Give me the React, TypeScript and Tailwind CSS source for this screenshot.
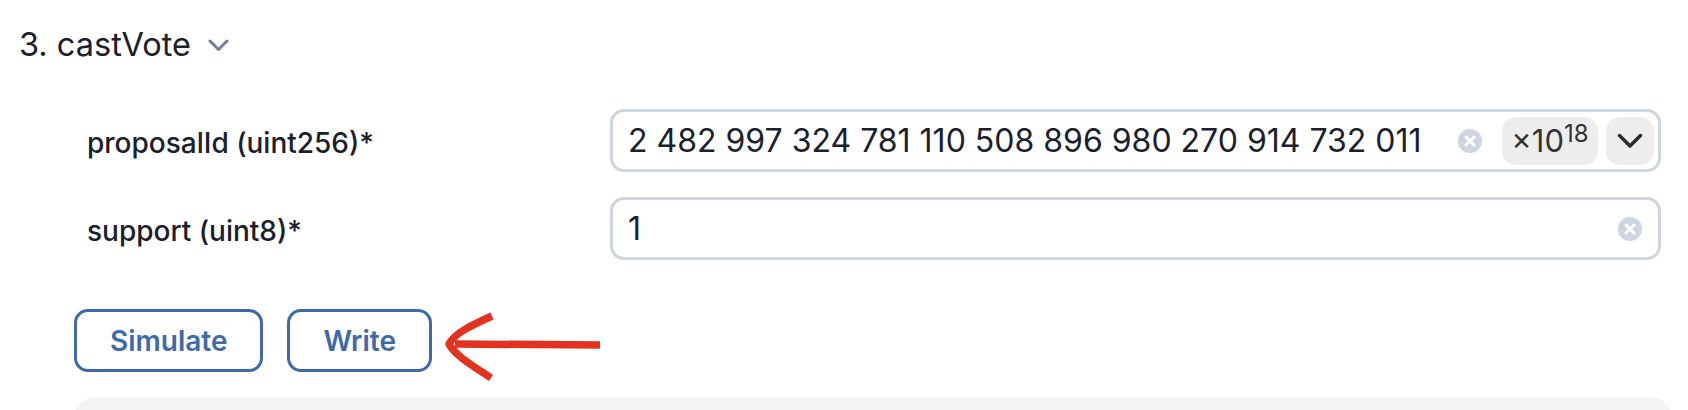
import React from "react";

function ClearIcon() {
  return (
    <svg width="24" height="24" viewBox="0 0 24 24" className="shrink-0">
      <circle cx="12" cy="12" r="12" fill="#cdd5df" />
      <path d="M8 8 L16 16 M16 8 L8 16" stroke="#ffffff" strokeWidth="3" strokeLinecap="round" />
    </svg>
  );
}

export default function App() {
  return (
    <div className="relative w-[1688px] h-[410px] overflow-hidden bg-white font-['Inter','Noto_Sans',sans-serif] text-[#1a202c]">
      <div className="pt-[26px] pl-[19px] flex items-center">
        <span className="text-[32.5px] leading-[38px]">3. castVote</span>
        <svg width="21" height="13" viewBox="0 0 21 13" className="ml-[17px] mt-[1px]">
          <path d="M2 2 L10.5 10.5 L19 2" fill="none" stroke="#718096" strokeWidth="3" strokeLinecap="round" strokeLinejoin="round" />
        </svg>
      </div>

      <div className="ml-[75px] w-[1586px] mt-[45px] flex flex-col gap-[25px]">
        <div className="flex items-center">
          <div className="w-[535px] pl-[12px] mt-[4px] text-[28px] leading-[34px] font-medium">proposalId (uint256)*</div>
          <div className="flex-1 h-[63px] border-[3px] border-[#cdd5df] rounded-[14px] flex items-center pl-[15px] pr-[4px]">
            <span className="flex-1 text-[32px] leading-[40px] whitespace-nowrap">2 482 997 324 781 110 508 896 980 270 914 732 011</span>
            <ClearIcon />
            <div className="ml-[20px] h-[48px] w-[96px] rounded-[14px] bg-[#ededed] flex items-center justify-center text-[#333333]">
              <span className="text-[31px] leading-[36px]">×10</span>
              <span className="text-[24px] leading-[20px] self-start mt-[7px]">18</span>
            </div>
            <div className="ml-[8px] h-[48px] w-[48px] rounded-[14px] bg-[#ededed] flex items-center justify-center">
              <svg width="26" height="16" viewBox="0 0 26 16">
                <path d="M2.5 2.5 L13 13 L23.5 2.5" fill="none" stroke="#2d2d2d" strokeWidth="3.5" strokeLinecap="round" strokeLinejoin="round" />
              </svg>
            </div>
          </div>
        </div>

        <div className="flex items-center">
          <div className="w-[535px] pl-[12px] mt-[4px] text-[28px] leading-[34px] font-medium">support (uint8)*</div>
          <div className="flex-1 h-[63px] border-[3px] border-[#cdd5df] rounded-[14px] flex items-center pl-[15px] pr-[16px]">
            <span className="flex-1 text-[32px] leading-[40px]">1</span>
            <ClearIcon />
          </div>
        </div>
      </div>

      <div className="ml-[74px] mt-[49px] flex gap-[24px]">
        <button className="h-[63px] px-[33px] border-[3px] border-[#4069ab] rounded-[14px] text-[#4069ab] text-[28px] font-semibold leading-[34px]">Simulate</button>
        <button className="h-[63px] px-[33px] border-[3px] border-[#4069ab] rounded-[14px] text-[#4069ab] text-[28px] font-semibold leading-[34px]">Write</button>
      </div>

      <div className="ml-[73px] mt-[25px] w-[1600px] h-[60px] rounded-[24px] bg-[#f4f4f4]" />

      <svg className="absolute left-0 top-0 pointer-events-none" width="1688" height="410" viewBox="0 0 1688 410">
        <path d="M600 345 L455 344" fill="none" stroke="#e3321f" strokeWidth="7.5" />
        <path d="M492 316 C470 326 455 333 449 344 C456 356 470 364 491 378" fill="none" stroke="#e3321f" strokeWidth="7.5" strokeLinecap="butt" strokeLinejoin="round" />
      </svg>
    </div>
  );
}
